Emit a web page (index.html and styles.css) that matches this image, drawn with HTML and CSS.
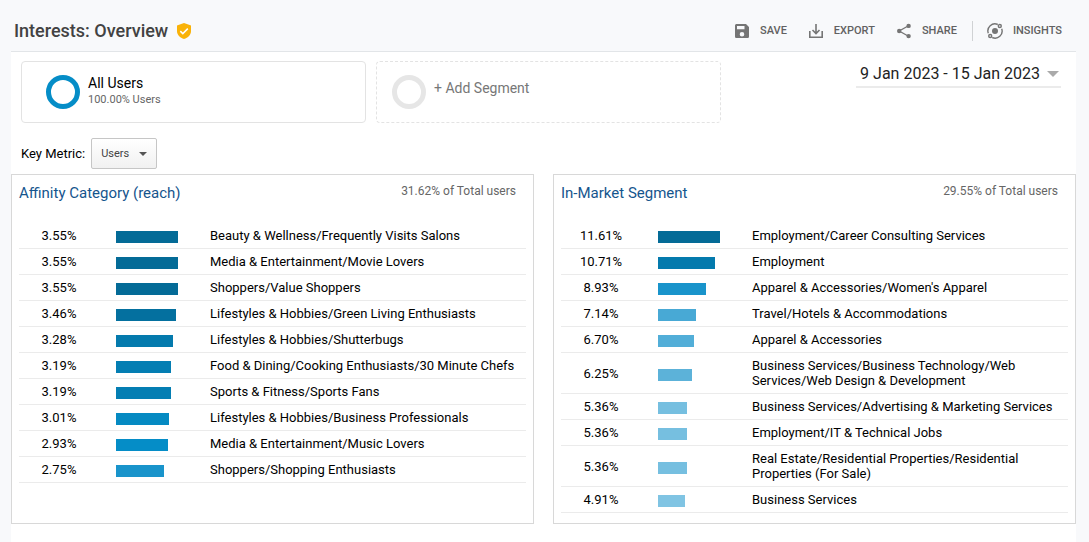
FILE: index.html
```html
<!DOCTYPE html>
<html lang="en">
<head>
<meta charset="utf-8">
<meta name="viewport" content="width=device-width, initial-scale=1">
<title>Interests: Overview</title>
<link rel="stylesheet" href="styles.css">
</head>
<body>
<header class="topbar">
  <h1 class="title">Interests: Overview</h1>
  <svg class="shield" viewBox="0 0 14 16" aria-hidden="true"><path d="M7 0 14 2.6V8c0 3.8-3 7-7 8-4-1-7-4.200-7-8V2.600z" fill="#f9b208"/><path d="m3.300 8.100 2.500 2.500 5-5" fill="none" stroke="#fff" stroke-width="1.500"/></svg>
  <nav class="actions" aria-label="Report actions">
    <button class="action" type="button">
      <svg class="action-icon" viewBox="0 0 16 16" aria-hidden="true"><path fill-rule="evenodd" d="M2.600 1H12l3 3v9.400c0 .9-.7 1.600-1.600 1.600H2.600C1.700 15 1 14.300 1 13.400V2.600C1 1.700 1.700 1 2.600 1zM3 3v3.200h7.500V3zm5 6a2.300 2.300 0 1 0 0 4.600A2.300 2.300 0 0 0 8 9z" fill="#757575"/></svg>
      SAVE
    </button>
    <button class="action" type="button">
      <svg class="action-icon" viewBox="0 0 16 16" aria-hidden="true"><path d="M1.800 8v6.200h12.400V8M8 1v9M4.500 7 8 10.500 11.500 7" fill="none" stroke="#757575" stroke-width="1.600"/></svg>
      EXPORT
    </button>
    <button class="action" type="button">
      <svg class="action-icon" viewBox="0 0 16 16" aria-hidden="true"><path d="M12.500 2.800 3.200 8l9.300 5.200" fill="none" stroke="#757575" stroke-width="1.300"/><g fill="#757575"><circle cx="12.600" cy="2.900" r="2.200"/><circle cx="3.200" cy="8" r="2.200"/><circle cx="12.600" cy="13.100" r="2.200"/></g></svg>
      SHARE
    </button>
    <button class="action action-insights" type="button">
      <svg class="action-icon" viewBox="0 0 16 16" aria-hidden="true"><g fill="none" stroke="#757575" stroke-width="1.400"><path d="M10.800 1.500A7 7 0 0 0 1.300 10.200M5.200 14.500A7 7 0 0 0 14.700 5.800"/><circle cx="12.800" cy="3" r="1.500"/><circle cx="3.200" cy="13" r="1.500"/></g><circle cx="8" cy="8" r="3" fill="#757575"/></svg>
      INSIGHTS
    </button>
  </nav>
</header>
<main class="sheet">
  <div class="segments">
    <button class="segment" type="button">
      <span class="ring"></span>
      <span class="segment-text"><span class="segment-name">All Users</span><span class="segment-share">100.00% Users</span></span>
    </button>
    <button class="segment segment-add" type="button">
      <span class="ring"></span>
      <span class="segment-text"><span class="segment-name">+ Add Segment</span></span>
    </button>
    <button class="dates" type="button">9 Jan 2023 - 15 Jan 2023<span class="dates-caret"></span></button>
  </div>
  <div class="metric">
    <label for="metric">Key Metric:</label>
    <span class="picker"><select id="metric" class="picker-select"><option>Users</option></select><span class="picker-caret"></span></span>
  </div>
  <div class="panels">
    <section class="panel">
      <div class="panel-head"><h2 class="panel-title"><a class="panel-link" href="#">Affinity Category (reach)</a></h2><p class="panel-total">31.62% of Total users</p></div>
      <table class="data">
        <tbody>
        <tr><td class="pct">3.55%</td><td class="graph"><div class="bar shade-1" style="width:62px"></div></td><td>Beauty &amp; Wellness/Frequently Visits Salons</td></tr>
        <tr><td class="pct">3.55%</td><td class="graph"><div class="bar shade-1" style="width:62px"></div></td><td>Media &amp; Entertainment/Movie Lovers</td></tr>
        <tr><td class="pct">3.55%</td><td class="graph"><div class="bar shade-1" style="width:62px"></div></td><td>Shoppers/Value Shoppers</td></tr>
        <tr><td class="pct">3.46%</td><td class="graph"><div class="bar shade-2" style="width:60px"></div></td><td>Lifestyles &amp; Hobbies/Green Living Enthusiasts</td></tr>
        <tr><td class="pct">3.28%</td><td class="graph"><div class="bar shade-3" style="width:57px"></div></td><td>Lifestyles &amp; Hobbies/Shutterbugs</td></tr>
        <tr><td class="pct">3.19%</td><td class="graph"><div class="bar shade-4" style="width:55px"></div></td><td>Food &amp; Dining/Cooking Enthusiasts/30 Minute Chefs</td></tr>
        <tr><td class="pct">3.19%</td><td class="graph"><div class="bar shade-4" style="width:55px"></div></td><td>Sports &amp; Fitness/Sports Fans</td></tr>
        <tr><td class="pct">3.01%</td><td class="graph"><div class="bar shade-5" style="width:53px"></div></td><td>Lifestyles &amp; Hobbies/Business Professionals</td></tr>
        <tr><td class="pct">2.93%</td><td class="graph"><div class="bar shade-6" style="width:52px"></div></td><td>Media &amp; Entertainment/Music Lovers</td></tr>
        <tr><td class="pct">2.75%</td><td class="graph"><div class="bar shade-7" style="width:48px"></div></td><td>Shoppers/Shopping Enthusiasts</td></tr>
        </tbody>
      </table>
    </section>
    <section class="panel">
      <div class="panel-head"><h2 class="panel-title"><a class="panel-link" href="#">In-Market Segment</a></h2><p class="panel-total">29.55% of Total users</p></div>
      <table class="data">
        <tbody>
        <tr><td class="pct">11.61%</td><td class="graph"><div class="bar shade-1" style="width:62px"></div></td><td>Employment/Career Consulting Services</td></tr>
        <tr><td class="pct">10.71%</td><td class="graph"><div class="bar shade-3" style="width:57px"></div></td><td>Employment</td></tr>
        <tr><td class="pct">8.93%</td><td class="graph"><div class="bar shade-7" style="width:48px"></div></td><td>Apparel &amp; Accessories/Women's Apparel</td></tr>
        <tr><td class="pct">7.14%</td><td class="graph"><div class="bar shade-8" style="width:38px"></div></td><td>Travel/Hotels &amp; Accommodations</td></tr>
        <tr><td class="pct">6.70%</td><td class="graph"><div class="bar shade-9" style="width:36px"></div></td><td>Apparel &amp; Accessories</td></tr>
        <tr><td class="pct">6.25%</td><td class="graph"><div class="bar shade-10" style="width:34px"></div></td><td>Business Services/Business Technology/Web Services/Web Design &amp; Development</td></tr>
        <tr><td class="pct">5.36%</td><td class="graph"><div class="bar shade-11" style="width:29px"></div></td><td>Business Services/Advertising &amp; Marketing Services</td></tr>
        <tr><td class="pct">5.36%</td><td class="graph"><div class="bar shade-11" style="width:29px"></div></td><td>Employment/IT &amp; Technical Jobs</td></tr>
        <tr><td class="pct">5.36%</td><td class="graph"><div class="bar shade-11" style="width:29px"></div></td><td>Real Estate/Residential Properties/Residential Properties (For Sale)</td></tr>
        <tr><td class="pct">4.91%</td><td class="graph"><div class="bar shade-12" style="width:27px"></div></td><td>Business Services</td></tr>
        </tbody>
      </table>
    </section>
  </div>
</main>
</body>
</html>
```
FILE: styles.css
```css
* { box-sizing: border-box; }

body {
  margin: 0;
  min-height: 100vh;
  padding: 0 13px 0 11px;
  display: flex;
  flex-direction: column;
  background: #f8f9fb;
  color: #000;
  font: 13px/15px Roboto, "Liberation Sans", sans-serif;
}

button, select { font: inherit; color: inherit; }
button { border: 0; padding: 0; background: none; text-align: left; cursor: pointer; }

.topbar {
  display: flex;
  align-items: center;
  padding: 10px 3px 0;
  height: 51px;
}
.title { margin: 0; font-size: 18px; line-height: 24px; font-weight: 500; color: #424242; }
.shield { width: 14px; height: 16px; margin-left: 9px; }
.actions { display: flex; align-items: center; gap: 21px; margin-left: auto; padding-right: 11px; }
.action {
  display: flex;
  align-items: center;
  gap: 10px;
  height: 20px;
  font-size: 11px;
  font-weight: 500;
  color: #616161;
}
.action-icon { width: 16px; height: 16px; }
.action-insights { border-left: 1px solid #d0d2d4; padding-left: 14px; margin-left: -6px; }

.sheet { flex: 1; background: #fff; border-top: 1px solid #e2e5e8; }

.segments { display: flex; gap: 10px; padding: 9px 15px 0 10px; }
.segment {
  display: flex;
  flex: 0 1 345px;
  gap: 8px;
  height: 62px;
  padding: 13px 10px 0 24px;
  border: 1px solid #e3e3e3;
  border-radius: 4px;
}
.ring { width: 34px; height: 34px; border: 5px solid #058dc7; border-radius: 50%; }
.segment-text { display: flex; flex-direction: column; }
.segment-name { font-size: 14px; line-height: 17px; }
.segment-share { font-size: 11px; line-height: 15px; color: #666; }
.segment-add { padding-left: 15px; border-style: dashed; color: #777; }
.segment-add .ring { border-color: #e6e6e6; }
.segment-add .segment-text { padding-top: 5px; }

.dates {
  display: flex;
  align-items: center;
  gap: 7px;
  height: 27px;
  margin-left: auto;
  padding: 0 2px 0 4px;
  border-bottom: 2px solid #ebebeb;
  font-size: 16px;
  white-space: nowrap;
  color: #222;
}
.dates-caret { border: 6px solid transparent; border-top-color: #aaa; border-bottom: 0; }

.metric { display: flex; align-items: center; gap: 6px; padding: 15px 10px 5px; }
.picker { display: grid; align-items: center; }
.picker-select {
  grid-area: 1 / 1;
  appearance: none;
  width: 66px;
  height: 31px;
  padding: 0 9px;
  border: 1px solid #c6c6c6;
  border-radius: 2px;
  background: linear-gradient(#fff, #f1f1f1);
  font-size: 11px;
  color: #444;
}
.picker-caret {
  grid-area: 1 / 1;
  justify-self: end;
  margin-right: 10px;
  border: 4px solid transparent;
  border-top-color: #555;
  border-bottom: 0;
  pointer-events: none;
}

.panels { display: flex; gap: 19px; }
.panel { flex: 1 1 0; min-width: 0; min-height: 350px; padding: 8px 7px 10px; border: 1px solid #d8d8d8; }
.panel-head { display: flex; justify-content: space-between; padding-right: 10px; height: 40px; }
.panel-title { margin: 0; font-size: 15px; line-height: 20px; font-weight: 400; }
.panel-link { color: #15558d; text-decoration: none; }
.panel-total { margin: 0; font-size: 12px; line-height: 16px; color: #666; }

.data { width: 100%; border-collapse: separate; border-spacing: 0; table-layout: fixed; }
.data td { padding: 5px 0; border-bottom: 1px solid #ebebeb; vertical-align: middle; }
.data .pct { width: 80px; text-align: center; }
.data .graph { width: 111px; padding: 3px 0 0 17px; }
.bar { height: 12px; }
.shade-1 { background: #046b97; }
.shade-2 { background: #04709f; }
.shade-3 { background: #047aad; }
.shade-4 { background: #047eb3; }
.shade-5 { background: #058ac2; }
.shade-6 { background: #058dc7; }
.shade-7 { background: #1994cb; }
.shade-8 { background: #48a9d5; }
.shade-9 { background: #52aed8; }
.shade-10 { background: #5cb2d9; }
.shade-11 { background: #76bfe0; }
.shade-12 { background: #80c4e3; }
```
